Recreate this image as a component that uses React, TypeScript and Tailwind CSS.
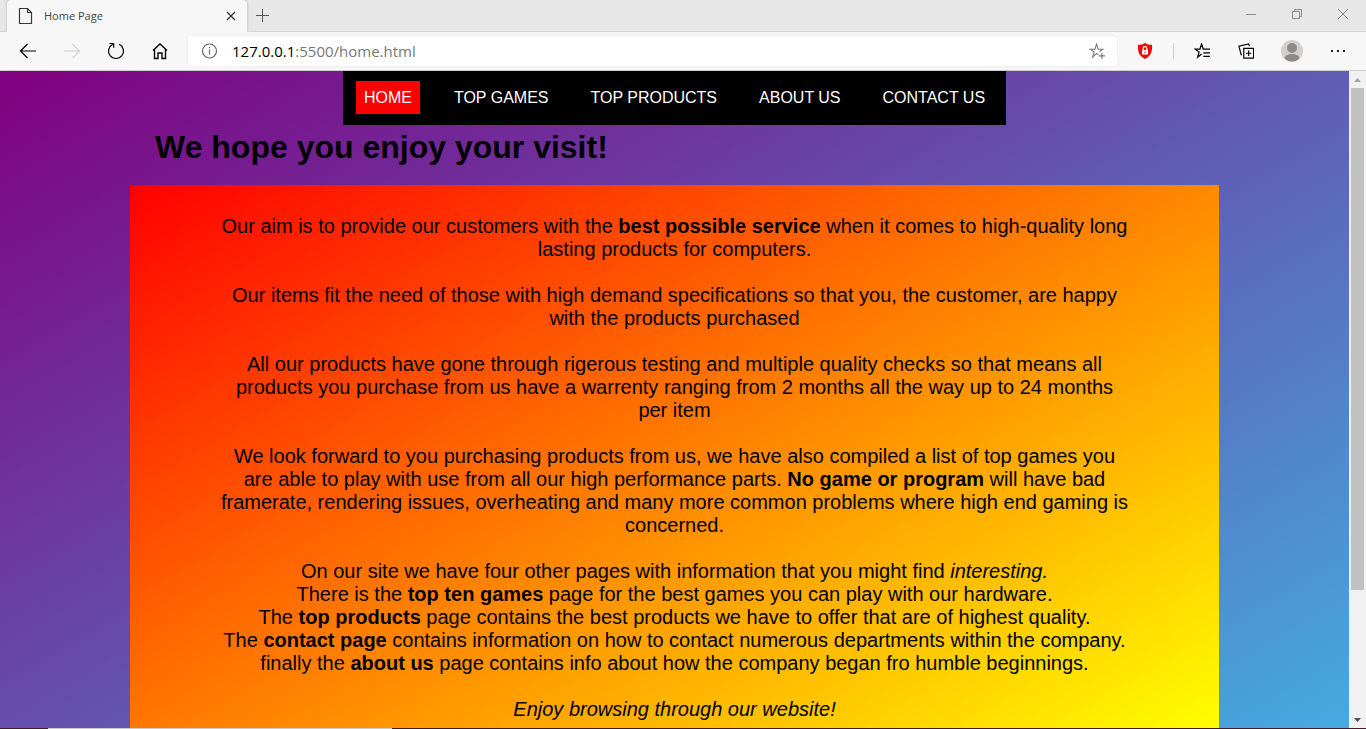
import React from "react";

function Icon({
  children,
  size = "h-[18px] w-[18px]",
  className = "",
}: {
  children: React.ReactNode;
  size?: string;
  className?: string;
}) {
  return (
    <svg
      viewBox="0 0 18 18"
      className={`shrink-0 ${size} ${className}`}
      fill="none"
      stroke="currentColor"
      strokeWidth="1.2"
      aria-hidden="true"
    >
      {children}
    </svg>
  );
}

const toolButton = "flex h-8 w-8 shrink-0 items-center justify-center";

function TabStrip() {
  return (
    <div className="flex h-8 items-stretch overflow-hidden bg-[#e7e7e7]">
      <div className="flex w-[7px] items-end">
        <span className="h-px w-full bg-[#d5d5d5]" />
      </div>
      <div className="flex w-60 items-center rounded-t-[4px] bg-[#f7f7f7] pr-2 pl-[10px] shadow-[0_0_3px_rgba(0,0,0,0.25)]">
        <Icon className="text-[#3a3a3a]">
          <path d="M2.500 1.500h8l4 4v11h-12z M10.500 1.500v4h4" />
        </Icon>
        <span className="ml-[9px] flex-1 font-['Open_Sans','Noto_Sans',sans-serif] text-[11px] text-[#444]">Home Page</span>
        <button type="button" aria-label="Close tab" className="flex h-4 w-4 items-center justify-center text-[#333]">
          <svg viewBox="0 0 10 10" className="h-[10px] w-[10px]" stroke="currentColor" strokeWidth="1.300" aria-hidden="true">
            <path d="M1 1l8 8M9 1L1 9" />
          </svg>
        </button>
      </div>
      <div className="flex flex-1 items-center border-b border-[#d5d5d5] pl-[7px]">
        <button type="button" aria-label="New tab" className="flex h-4 w-4 items-center justify-center text-[#555]">
          <svg viewBox="0 0 13 13" className="h-[13px] w-[13px]" stroke="currentColor" aria-hidden="true">
            <path d="M0 6.5h13M6.5 0v13" />
          </svg>
        </button>
        <div className="ml-auto flex h-full items-center pb-1 text-[#888]">
          <button type="button" aria-label="Minimize" className="flex h-6 w-[46px] items-center justify-center">
            <svg viewBox="0 0 10 10" className="h-[10px] w-[10px]" stroke="currentColor" aria-hidden="true">
              <path d="M0 5.5h10" />
            </svg>
          </button>
          <button type="button" aria-label="Restore" className="flex h-6 w-[46px] items-center justify-center">
            <svg viewBox="0 0 10 10" className="h-[10px] w-[10px]" stroke="currentColor" fill="none" aria-hidden="true">
              <path d="M.5 2.5h7v7h-7zM2.5 2.5v-2h7v7h-2" />
            </svg>
          </button>
          <button type="button" aria-label="Close window" className="flex h-6 w-[46px] items-center justify-center">
            <svg viewBox="0 0 10 10" className="h-[10px] w-[10px]" stroke="currentColor" aria-hidden="true">
              <path d="M0 0l10 10M10 0L0 10" />
            </svg>
          </button>
        </div>
      </div>
    </div>
  );
}

function Toolbar() {
  return (
    <div className="flex h-[39px] items-center border-b border-[#cfcfcf] bg-[#f7f7f7] pr-3 pl-3 text-black">
      <div className="flex gap-3">
        <button type="button" aria-label="Back" className={toolButton}>
          <Icon>
            <path d="M17 9H1.5M8.500 2L1.500 9l7 7" />
          </Icon>
        </button>
        <button type="button" aria-label="Forward" className={`${toolButton} text-[#d0d0d0]`}>
          <Icon>
            <path d="M1 9h15.500M9.500 2l7 7-7 7" />
          </Icon>
        </button>
        <button type="button" aria-label="Refresh" className={toolButton}>
          <Icon className="overflow-visible">
            <path d="M12.200 2.200A7.500 7.500 0 1 1 5.800 2.200M2.500 1.500h4.200v4.300" />
          </Icon>
        </button>
        <button type="button" aria-label="Home" className={toolButton}>
          <Icon>
            <path d="M2 8.500L9 2l7 6.500M3.500 7.500v9h3.500v-5.500h4v5.500h3.500v-9" strokeWidth="1.4" />
          </Icon>
        </button>
      </div>
      <div className="ml-3 flex h-[30px] flex-1 items-center rounded-[4px] bg-white pr-3 pl-3 shadow-[0_0_3px_rgba(0,0,0,0.08)]">
        <button type="button" aria-label="Site information" className="flex items-center text-[#666]">
          <Icon>
            <circle cx="9.500" cy="9" r="7" />
            <path d="M9.500 7.500v5M9.500 5v1.300" />
          </Icon>
        </button>
        <div className="ml-[14px] flex-1 font-['Open_Sans','Noto_Sans',sans-serif] text-[15px] text-[#777]">
          <span className="text-black">127.0.0.1</span>:5500/home.html
        </div>
        <button type="button" aria-label="Add to favorites" className="flex items-center text-[#777]">
          <Icon size="h-4 w-4">
            <path d="M10.500 13.200L8.500 11.800 4.100 16l1.600-6L1.500 7h5.200L8.500 1.200l1.800 5.800H15.500L11.800 9.800M14.500 11v7M11 14.500h7" />
          </Icon>
        </button>
      </div>
      <div className="ml-3 flex items-center">
        <button type="button" aria-label="Protection" className={toolButton}>
          <svg viewBox="0 0 16 18" className="h-[18px] w-4" aria-hidden="true">
            <path d="M8 1c2 1.400 4 1.800 7 1.800 .5 6-.5 11-7 14.200C1.500 13.800.5 8.800 1 2.800 4 2.800 6 2.400 8 1z" fill="#ea0c0c" />
            <path d="M5 8h6v4.500H5z" fill="#fff" />
            <path d="M6.200 8V6.500a1.800 1.800 0 0 1 3.600 0V8" fill="none" stroke="#fff" strokeWidth="1.200" />
            <path d="M7.500 9.300h1v1.800h-1z" fill="#ea0c0c" />
          </svg>
        </button>
        <span className="mr-3 ml-3 h-4 w-px bg-[#cfcfcf]" />
        <button type="button" aria-label="Favorites" className={toolButton}>
          <Icon size="h-4 w-4">
            <path d="M8.500 12.500L4.100 16l1.600-6L1.500 7h5.200L8.500 1.200l1.800 5.300M9.500 7h8.500M10.500 11h7.500M10.500 15h7.500" strokeWidth="1.400" />
          </Icon>
        </button>
        <button type="button" aria-label="Collections" className={`${toolButton} ml-3`}>
          <Icon size="h-4 w-4">
            <path d="M6.500 6h11v11h-11zM12 8.500v6M9 11.500h6M4.500 13h-1L1 3.500l11-2.500.8 2.500" strokeWidth="1.300" />
          </Icon>
        </button>
        <button type="button" aria-label="Profile" className={`${toolButton} ml-[14px]`}>
          <svg viewBox="0 0 22 22" className="h-[22px] w-[22px]" aria-hidden="true">
            <circle cx="11" cy="11" r="11" fill="#d2d0cd" />
            <circle cx="11" cy="8" r="5" fill="#8d8a86" />
            <path d="M3.500 18.500c0-6 15-6 15 0a11 11 0 0 1-15 0z" fill="#8d8a86" />
          </svg>
        </button>
        <button type="button" aria-label="Settings and more" className={`${toolButton} ml-[14px]`}>
          <svg viewBox="0 0 14 2" className="h-[2px] w-[14px]" fill="#222" aria-hidden="true">
            <path d="M0 0h2v2H0zM6 0h2v2H6zM12 0h2v2h-2z" />
          </svg>
        </button>
      </div>
    </div>
  );
}

const links = ["TOP GAMES", "TOP PRODUCTS", "ABOUT US", "CONTACT US"];

function SiteNav() {
  return (
    <nav className="mx-auto flex h-[54px] w-fit items-start gap-[26px] bg-black pt-[10px] pr-[13px] pl-[13px] text-base leading-[33px] whitespace-nowrap text-white">
      <a href="#home" className="bg-[#ff0000] px-2">
        HOME
      </a>
      {links.map((name) => (
        <a key={name} href="#site" className="px-2">
          {name}
        </a>
      ))}
    </nav>
  );
}

function Scrollbar() {
  return (
    <div className="flex w-[17px] shrink-0 flex-col items-center bg-[#f1f1f1]" aria-hidden="true">
      <div className="flex h-[17px] items-center">
        <svg viewBox="0 0 7 4" className="h-1 w-[7px]" fill="#a3a3a3">
          <path d="M0 4L3.500 0 7 4z" />
        </svg>
      </div>
      <div className="w-full flex-1 px-[2px]">
        <div className="h-[80.5%] bg-[#c1c1c1]" />
      </div>
      <div className="flex h-[17px] items-center">
        <svg viewBox="0 0 7 4" className="h-1 w-[7px]" fill="#505050">
          <path d="M0 0l3.500 4L7 0z" />
        </svg>
      </div>
    </div>
  );
}

export default function App() {
  return (
    <div className="flex h-screen flex-col overflow-hidden">
      <header>
        <TabStrip />
        <Toolbar />
      </header>
      <div className="flex min-h-0 flex-1">
        <main className="min-w-0 flex-1 overflow-hidden bg-linear-150/srgb from-[#800080] to-[#45aae0] font-['Liberation_Sans',Arial,sans-serif] text-black">
          <SiteNav />
          <h1 className="mt-1 ml-[155px] text-[32px] leading-9 font-bold">We hope you enjoy your visit!</h1>
          <section className="mx-[130px] mt-5 bg-linear-150/srgb from-[#ff0000] to-[#ffff00] px-[90px] pt-[30px] pb-3 text-center text-xl leading-[23px]">
            <div className="flex flex-col gap-[23px]">
              <p>
                Our aim is to provide our customers with the <b>best possible service</b> when it comes to high-quality long
                lasting products for computers.
              </p>
              <p>
                Our items fit the need of those with high demand specifications so that you, the customer, are happy with the
                products purchased
              </p>
              <p>
                All our products have gone through rigerous testing and multiple quality checks so that means all products you
                purchase from us have a warrenty ranging from 2 months all the way up to 24 months per item
              </p>
              <p>
                We look forward to you purchasing products from us, we have also compiled a list of top games you are able to
                play with use from all our high performance parts. <b>No game or program</b> will have bad framerate, rendering
                issues, overheating and many more common problems where high end gaming is concerned.
              </p>
              <p>
                On our site we have four other pages with information that you might find <i>interesting.</i>
                <br />
                There is the <b>top ten games</b> page for the best games you can play with our hardware.
                <br />
                The <b>top products</b> page contains the best products we have to offer that are of highest quality.
                <br />
                The <b>contact page</b> contains information on how to contact numerous departments within the company.
                <br />
                finally the <b>about us</b> page contains info about how the company began fro humble beginnings.
              </p>
              <p>
                <i>Enjoy browsing through our website!</i>
              </p>
            </div>
          </section>
        </main>
        <Scrollbar />
      </div>
      <div className="flex h-px shrink-0 bg-[#451a2c] pl-12">
        <span className="w-[344px] bg-[#ccc]" />
      </div>
    </div>
  );
}
